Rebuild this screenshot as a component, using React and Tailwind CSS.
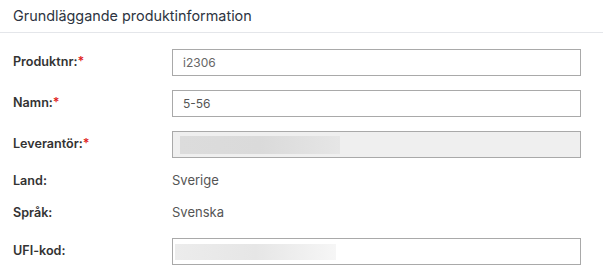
export default function App() {
    const font = { fontFamily: 'Inter, "Noto Sans", sans-serif' }

    return (
        <div className="w-[603px] h-[278px] bg-white overflow-hidden" style={font}>
            {/* Header */}
            <div className="h-[33px] border-b border-[#e4e6ea] flex items-center pl-[13px]">
                <h2 className="text-[14.4px] text-[#2d3441] font-normal">Grundläggande produktinformation</h2>
            </div>

            <div className="flex flex-col pt-[16px]">
                {/* Produktnr */}
                <div className="flex items-center h-[27px]">
                    <label className="w-[172px] shrink-0 pl-[13px] text-[12.6px] font-semibold text-[#333]">
                        Produktnr:<span className="text-[#e02020]">*</span>
                    </label>
                    <div className="w-[409px] h-[27px] border border-[#a9a9a9] flex items-center px-[10px] text-[12px] text-[#666]">
                        i2306
                    </div>
                </div>

                {/* Namn */}
                <div className="flex items-center h-[27px] mt-[14px]">
                    <label className="w-[172px] shrink-0 pl-[13px] text-[12.6px] font-semibold text-[#333]">
                        Namn:<span className="text-[#e02020]">*</span>
                    </label>
                    <div className="w-[409px] h-[27px] border border-[#a9a9a9] flex items-center px-[10px] text-[12px] text-[#555]">
                        5-56
                    </div>
                </div>

                {/* Leverantör */}
                <div className="flex items-center h-[27px] mt-[14px]">
                    <label className="w-[172px] shrink-0 pl-[13px] text-[12.6px] font-semibold text-[#333]">
                        Leverantör:<span className="text-[#e02020]">*</span>
                    </label>
                    <div className="w-[409px] h-[27px] border border-[#a9a9a9] bg-[#efefef] flex items-center pl-[7px]">
                        <div className="w-[160px] h-[18px] bg-gradient-to-r from-[#dcdcdc] via-[#dadada] to-[#e6e6e6]"></div>
                    </div>
                </div>

                {/* Land */}
                <div className="flex items-center h-[20px] mt-[13px]">
                    <span className="w-[172px] shrink-0 pl-[13px] text-[12.6px] font-semibold text-[#333]">Land:</span>
                    <span className="text-[13px] text-[#555]">Sverige</span>
                </div>

                {/* Språk */}
                <div className="flex items-center h-[20px] mt-[12px]">
                    <span className="w-[172px] shrink-0 pl-[13px] text-[12.6px] font-semibold text-[#333]">Språk:</span>
                    <span className="text-[13px] text-[#555]">Svenska</span>
                </div>

                {/* UFI-kod */}
                <div className="flex items-center h-[27px] mt-[15px]">
                    <label className="w-[172px] shrink-0 pl-[13px] text-[12.6px] font-semibold text-[#333]">UFI-kod:</label>
                    <div className="w-[409px] h-[27px] border border-[#a9a9a9] flex items-center pl-[2px]">
                        <div className="w-[161px] h-[16px] bg-gradient-to-r from-[#ececec] via-[#e6e6e6] to-[#f6f6f6]"></div>
                    </div>
                </div>
            </div>
        </div>
    )
}
